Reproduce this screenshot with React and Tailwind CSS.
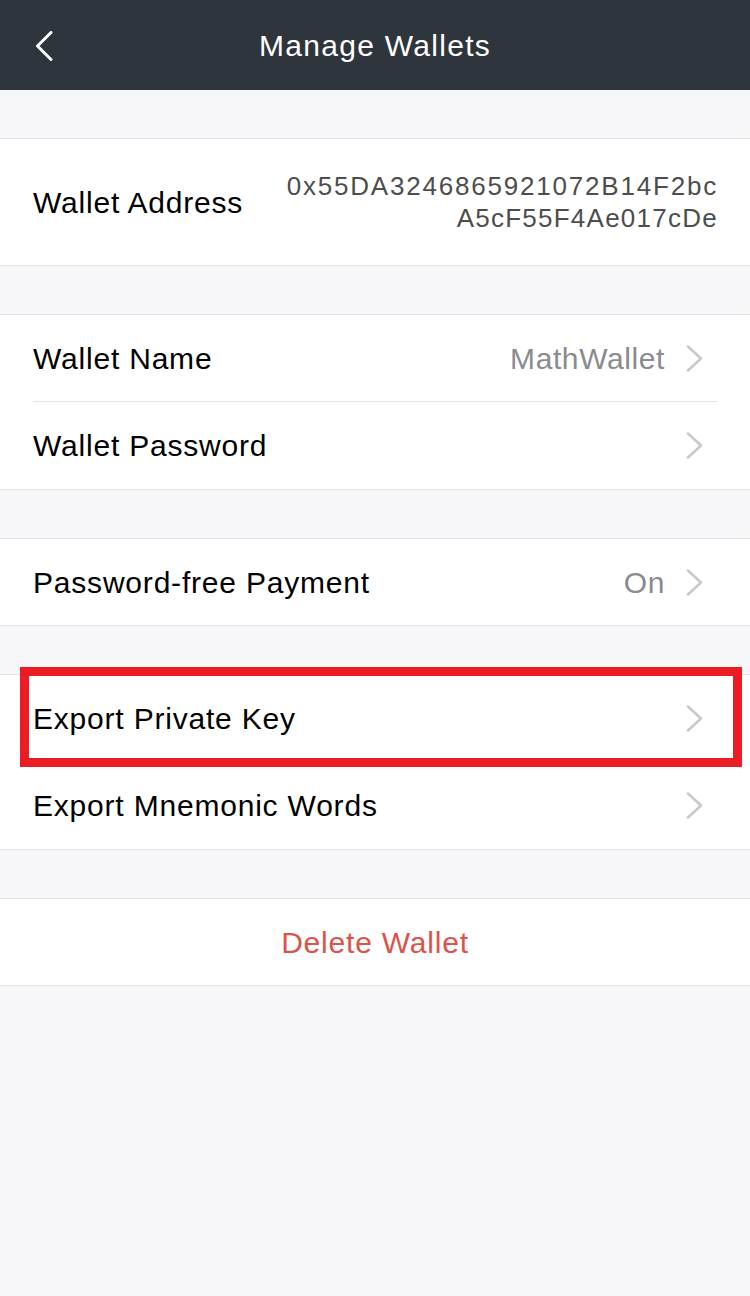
import React from 'react';

const FONT = { fontFamily: '"Liberation Sans", Arial, sans-serif' };

function Chevron() {
    return (
        <svg width="17" height="27" viewBox="0 0 17 27" className="shrink-0">
            <polyline points="2,1.5 15,13.5 2,25.5" fill="none" stroke="#c7c7cc" strokeWidth="2.5" strokeLinecap="round" strokeLinejoin="round" />
        </svg>
    );
}

function Row({ label, value, divider, highlight, short }) {
    return (
        <div className={`relative ${short ? 'h-[86px]' : 'h-[87px]'} ${highlight ? 'z-10' : ''}`}>
            <div className={`mx-[33px] h-full flex items-center justify-between ${divider ? 'border-b border-[#e3e3e6]' : ''}`}>
                <span className="text-[30px] tracking-[0.8px] text-black">{label}</span>
                <div className="flex items-center gap-[21px] pr-[14px]">
                    {value && <span className="text-[30px] tracking-[0.6px] text-[#8a8a8f]">{value}</span>}
                    <Chevron />
                </div>
            </div>
            {highlight && (
                <div className="absolute left-[20px] right-[8px] -top-[8px] -bottom-[5px] border-[9px] border-[#ec1c24] pointer-events-none" />
            )}
        </div>
    );
}

function Section({ children }) {
    return <div className="bg-white border-y border-[#e3e3e6] mt-[48px]">{children}</div>;
}

export default function App() {
    return (
        <div className="min-h-[1296px] bg-[#f7f7f9]" style={FONT}>
            <div className="h-[90px] bg-[#2f353c] relative flex items-center justify-center">
                <svg width="18" height="30" viewBox="0 0 18 30" className="absolute left-[35px] top-[31px]">
                    <polyline points="16,1.5 2.5,15 16,28.5" fill="none" stroke="#fff" strokeWidth="3" strokeLinecap="round" strokeLinejoin="round" />
                </svg>
                <span className="text-white text-[30px] tracking-[1.3px]">Manage Wallets</span>
            </div>

            <Section>
                <div className="h-[126px] mx-[33px] flex items-center justify-between">
                    <span className="text-[30px] tracking-[0.8px] text-black">Wallet Address</span>
                    <div className="text-right text-[26px] leading-[32px] text-[#4d4d4d] -mr-[1px]">
                        <div className="tracking-[1.8px]">0x55DA3246865921072B14F2bc</div>
                        <div className="tracking-[1.25px]">A5cF55F4Ae017cDe</div>
                    </div>
                </div>
            </Section>

            <Section>
                <Row label="Wallet Name" value="MathWallet" divider />
                <Row label="Wallet Password" />
            </Section>

            <Section>
                <Row label="Password-free Payment" value="On" short />
            </Section>

            <Section>
                <Row label="Export Private Key" highlight />
                <Row label="Export Mnemonic Words" />
            </Section>

            <Section>
                <div className="h-[86px] flex items-center justify-center">
                    <span className="text-[30px] tracking-[0.8px] text-[#dc5349]">Delete Wallet</span>
                </div>
            </Section>
        </div>
    );
}
